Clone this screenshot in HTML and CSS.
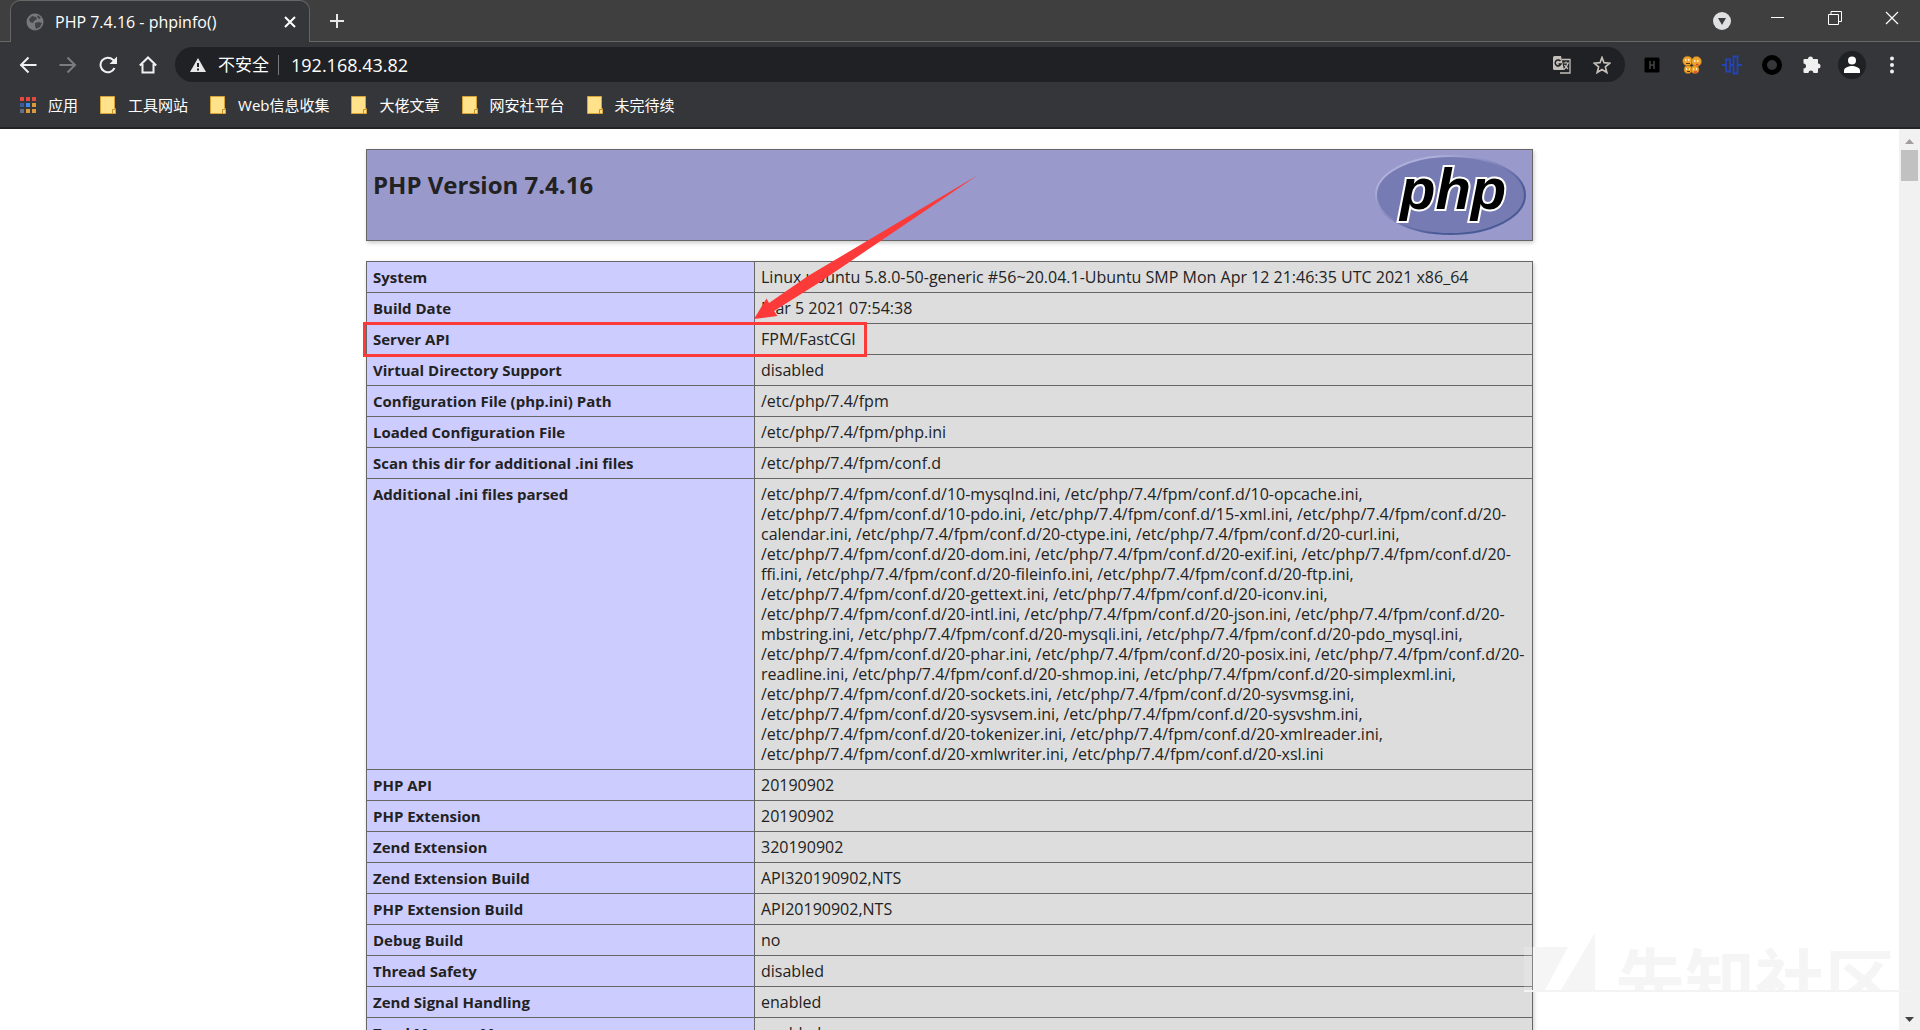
FILE: index.html
```html
<!DOCTYPE html>
<html lang="zh-CN">
<head>
<meta charset="utf-8">
<title>PHP 7.4.16 - phpinfo()</title>
<link rel="stylesheet" href="styles.css">
</head>
<body>
<header class="chrome">
  <div class="tabstrip">
    <div class="tab">
      <svg class="i18" viewBox="0 0 18 18"><circle cx="9" cy="9" r="8.500" fill="#77787b"/><path d="M3 6l3-3 4 1 1 2-3 2-1 2-3-1zM9 10l4-1 3 1-2 4-4 2-1-3zM12 2l3 3-2 1-2-2z" fill="#414245"/></svg>
      <span class="tab-title">PHP 7.4.16 - phpinfo()</span>
      <button class="icon-btn" aria-label="关闭标签页"><svg width="12" height="12" viewBox="0 0 12 12"><path d="M1 1l10 10M11 1L1 11" stroke="#fff" stroke-width="2"/></svg></button>
    </div>
    <button class="icon-btn new-tab" aria-label="新标签页"><svg width="16" height="16" viewBox="0 0 16 16"><path d="M8 1v14M1 8h14" stroke="#e8e8e8" stroke-width="2"/></svg></button>
    <div class="window-controls">
      <button class="icon-btn search-tabs" aria-label="搜索标签页"><svg class="i18" viewBox="0 0 18 18"><circle cx="9" cy="9" r="9" fill="#dfe0e2"/><path d="M5 6h8l-4 7z" fill="#3c3c3c"/></svg></button>
      <button class="icon-btn win" aria-label="最小化"><svg width="14" height="14" viewBox="0 0 14 14"><path d="M0 6.500h13" stroke="#fff"/></svg></button>
      <button class="icon-btn win" aria-label="还原"><svg width="14" height="14" viewBox="0 0 14 14"><path d="M.5 3.500h10v10h-10zM3 3V.5h10.500v10H11" fill="none" stroke="#fff"/></svg></button>
      <button class="icon-btn win" aria-label="关闭"><svg width="14" height="14" viewBox="0 0 14 14"><path d="M1 1l12 12M13 1L1 13" stroke="#fff" stroke-width="1.200"/></svg></button>
    </div>
  </div>
  <div class="toolbar">
    <nav class="nav">
      <button class="icon-btn" aria-label="后退"><svg class="i18" viewBox="0 0 18 18"><path d="M17.500 9H2M9.500 1.500L2 9l7.500 7.500" fill="none" stroke="#f0f0f0" stroke-width="2"/></svg></button>
      <button class="icon-btn" aria-label="前进"><svg class="i18" viewBox="0 0 18 18"><path d="M.5 9H16M8.500 1.500L16 9l-7.500 7.500" fill="none" stroke="#7b7c7f" stroke-width="2"/></svg></button>
      <button class="icon-btn" aria-label="重新加载"><svg class="i18" viewBox="0 0 18 18"><path d="M15.500 12A7.300 7.300 0 1 1 14 3.800L16 6" fill="none" stroke="#f0f0f0" stroke-width="2"/><path d="M18 .5v7.500h-7.500z" fill="#f0f0f0"/></svg></button>
      <button class="icon-btn" aria-label="主页"><svg class="i18" viewBox="0 0 18 18"><path d="M.8 9.500L9 1.500l8.200 8M3.500 8v8.500h11V8" fill="none" stroke="#f0f0f0" stroke-width="2"/></svg></button>
    </nav>
    <div class="omnibox">
      <svg width="16" height="14" viewBox="0 0 16 14"><path d="M8 0l8 14H0z" fill="#e8e8e8"/><path d="M8 5v4M8 10.500v2" stroke="#202124" stroke-width="2"/></svg>
      <label class="insecure" for="url">不安全</label>
      <input id="url" class="url" value="192.168.43.82">
      <button class="icon-btn" aria-label="翻译"><svg class="i18" viewBox="0 0 18 18"><path d="M9 3.500h8v13.500H7" fill="none" stroke="#c4bfb9" stroke-width="1.300"/><path d="M0 1.500Q0 0 1.500 0H8l3 14H1.500Q0 14 0 12.500z" fill="#c4bfb9"/><path d="M7.500 5A3 3 0 1 0 8 8H5.500" fill="none" stroke="#202124" stroke-width="1.500"/><path d="M10.500 7H16M13 5.500V7M15 7q-1 4-4 6.500M11.500 9l3.500 4" fill="none" stroke="#c4bfb9" stroke-width="1.200"/></svg></button>
      <button class="icon-btn" aria-label="收藏"><svg class="i18" viewBox="0 0 18 18"><path d="M9 1.500l2 5.200 5.800.5-4.400 3.700 1.400 5.600L9 13.500l-4.800 3 1.400-5.600L1.200 7.200l5.800-.5z" fill="none" stroke="#c4bfb9" stroke-width="1.700"/></svg></button>
    </div>
    <div class="extensions">
      <button class="icon-btn" aria-label="H"><svg class="i20" viewBox="0 0 20 20"><rect x="2.500" y="2.500" width="15" height="15" rx="1.500" fill="#000"/><path d="M8 6v8M12 6v8M8 10h4" stroke="#444" stroke-width="1.500"/></svg></button>
      <button class="icon-btn" aria-label="表情"><svg class="i20" viewBox="0 0 20 20"><g fill="#eda52d" stroke="#a86a18" stroke-width=".6"><circle cx="5.500" cy="6" r="4.800"/><circle cx="14.500" cy="6.500" r="5"/><circle cx="6" cy="14.500" r="4"/><circle cx="13" cy="14.500" r="4"/></g><path d="M3 5h1.500M6 5h1.500M12 6h1.500M15 6h1.500M4 14h1M7 14h1M11 14h1M14 14h1" stroke="#fff" stroke-width="1.500"/><path d="M4 8.500h4M5 16.500h3" stroke="#5b3510"/><path d="M14 9.500h2.500M12 17h3" stroke="#e43c38" stroke-width="1.500"/></svg></button>
      <button class="icon-btn" aria-label="波形"><svg class="i20" viewBox="0 0 20 20"><path d="M0 10h4M4 4.500h4v12H4zM8 10h3.500M11.500 1.500h4v17h-4zM15.500 10H20" fill="none" stroke="#2344b6" stroke-width="1.800"/></svg></button>
      <button class="icon-btn" aria-label="圆环"><svg class="i20" viewBox="0 0 20 20"><circle cx="10" cy="10" r="7.500" fill="none" stroke="#000" stroke-width="5"/></svg></button>
      <button class="icon-btn" aria-label="扩展程序"><svg class="i20" viewBox="0 0 20 20"><path d="M1.500 5Q1.500 4 2.500 4H6a2.500 2.500 0 1 1 5 0h4q1 0 1 1v3.500a2.500 2.500 0 1 1 0 5V17q0 1-1 1h-3.500a2.500 2.500 0 0 0-5 0h-4q-1 0-1-1v-3.500a2.500 2.500 0 0 0 0-5z" fill="#f0f0f0"/></svg></button>
      <button class="icon-btn avatar" aria-label="用户"><svg class="i18" viewBox="0 0 18 18"><circle cx="9" cy="4.500" r="4" fill="#fff"/><path d="M1 17v-2.500C1 11.500 6 10 9 10s8 1.500 8 4.500V17z" fill="#fff"/></svg></button>
      <button class="icon-btn" aria-label="菜单"><svg class="i18" viewBox="0 0 18 18" fill="#f0f0f0"><circle cx="9" cy="2.500" r="2"/><circle cx="9" cy="9" r="2"/><circle cx="9" cy="15.500" r="2"/></svg></button>
    </div>
  </div>
  <nav class="bookmarks">
    <a class="bookmark" href="#"><svg width="16" height="17" viewBox="0 0 16 17"><path d="M0 0h4v4H0zM6 0h4v4H6zM12 0h4v4h-4z" fill="#e24a3f"/><path d="M0 6h4v4H0z" fill="#3c5a9c"/><path d="M6 6h4v4H6z" fill="#3b8bf0"/><path d="M12 6h4v4h-4zM6 12h4v4H6zM12 12h4v4h-4z" fill="#d89a3a"/><path d="M0 12h4v4H0z" fill="#5f6f86"/></svg>应用</a>
    <a class="bookmark" href="#"><svg class="folder" viewBox="0 0 16 18"><use href="#folder"/></svg>工具网站</a>
    <a class="bookmark" href="#"><svg class="folder" viewBox="0 0 16 18"><use href="#folder"/></svg>Web信息收集</a>
    <a class="bookmark" href="#"><svg class="folder" viewBox="0 0 16 18"><use href="#folder"/></svg>大佬文章</a>
    <a class="bookmark" href="#"><svg class="folder" viewBox="0 0 16 18"><use href="#folder"/></svg>网安社平台</a>
    <a class="bookmark" href="#"><svg class="folder" viewBox="0 0 16 18"><g id="folder"><path d="M.5.5H14.500V12L15.500 13V17.500H.5z" fill="#ffe28a" stroke="#d9a437"/><path d="M12.500 17.500V13.500h3" fill="none" stroke="#c98f22"/></g></svg>未完待续</a>
  </nav>
</header>

<div class="viewport">
  <main class="page">
    <div class="info">
      <section class="banner">
        <h1 class="version">PHP Version 7.4.16</h1>
        <svg class="logo" viewBox="0 0 151 80" role="img" aria-label="PHP logo">
          <defs><linearGradient id="rim" x1="0" y1="0" x2="1" y2="1"><stop offset=".2" stop-color="#aeb0da"/><stop offset=".5" stop-color="#777bb3"/><stop offset=".7" stop-color="#485a96"/></linearGradient></defs>
          <ellipse cx="75.500" cy="40" rx="74.500" ry="39" fill="#777bb3" stroke="url(#rim)" stroke-width="2"/>
          <text class="logo-text" x="25" y="54">php</text>
        </svg>
      </section>
      <table class="data">
        <tr><th scope="row">System</th><td>Linux ubuntu 5.8.0-50-generic #56~20.04.1-Ubuntu SMP Mon Apr 12 21:46:35 UTC 2021 x86_64</td></tr>
        <tr><th scope="row">Build Date</th><td>Mar 5 2021 07:54:38</td></tr>
        <tr><th scope="row">Server API</th><td>FPM/FastCGI</td></tr>
        <tr><th scope="row">Virtual Directory Support</th><td>disabled</td></tr>
        <tr><th scope="row">Configuration File (php.ini) Path</th><td>/etc/php/7.4/fpm</td></tr>
        <tr><th scope="row">Loaded Configuration File</th><td>/etc/php/7.4/fpm/php.ini</td></tr>
        <tr><th scope="row">Scan this dir for additional .ini files</th><td>/etc/php/7.4/fpm/conf.d</td></tr>
        <tr><th scope="row">Additional .ini files parsed</th><td>/etc/php/7.4/fpm/conf.d/10-mysqlnd.ini, /etc/php/7.4/fpm/conf.d/10-opcache.ini,<br>/etc/php/7.4/fpm/conf.d/10-pdo.ini, /etc/php/7.4/fpm/conf.d/15-xml.ini, /etc/php/7.4/fpm/conf.d/20-<br>calendar.ini, /etc/php/7.4/fpm/conf.d/20-ctype.ini, /etc/php/7.4/fpm/conf.d/20-curl.ini,<br>/etc/php/7.4/fpm/conf.d/20-dom.ini, /etc/php/7.4/fpm/conf.d/20-exif.ini, /etc/php/7.4/fpm/conf.d/20-<br>ffi.ini, /etc/php/7.4/fpm/conf.d/20-fileinfo.ini, /etc/php/7.4/fpm/conf.d/20-ftp.ini,<br>/etc/php/7.4/fpm/conf.d/20-gettext.ini, /etc/php/7.4/fpm/conf.d/20-iconv.ini,<br>/etc/php/7.4/fpm/conf.d/20-intl.ini, /etc/php/7.4/fpm/conf.d/20-json.ini, /etc/php/7.4/fpm/conf.d/20-<br>mbstring.ini, /etc/php/7.4/fpm/conf.d/20-mysqli.ini, /etc/php/7.4/fpm/conf.d/20-pdo_mysql.ini,<br>/etc/php/7.4/fpm/conf.d/20-phar.ini, /etc/php/7.4/fpm/conf.d/20-posix.ini, /etc/php/7.4/fpm/conf.d/20-<br>readline.ini, /etc/php/7.4/fpm/conf.d/20-shmop.ini, /etc/php/7.4/fpm/conf.d/20-simplexml.ini,<br>/etc/php/7.4/fpm/conf.d/20-sockets.ini, /etc/php/7.4/fpm/conf.d/20-sysvmsg.ini,<br>/etc/php/7.4/fpm/conf.d/20-sysvsem.ini, /etc/php/7.4/fpm/conf.d/20-sysvshm.ini,<br>/etc/php/7.4/fpm/conf.d/20-tokenizer.ini, /etc/php/7.4/fpm/conf.d/20-xmlreader.ini,<br>/etc/php/7.4/fpm/conf.d/20-xmlwriter.ini, /etc/php/7.4/fpm/conf.d/20-xsl.ini</td></tr>
        <tr><th scope="row">PHP API</th><td>20190902</td></tr>
        <tr><th scope="row">PHP Extension</th><td>20190902</td></tr>
        <tr><th scope="row">Zend Extension</th><td>320190902</td></tr>
        <tr><th scope="row">Zend Extension Build</th><td>API320190902,NTS</td></tr>
        <tr><th scope="row">PHP Extension Build</th><td>API20190902,NTS</td></tr>
        <tr><th scope="row">Debug Build</th><td>no</td></tr>
        <tr><th scope="row">Thread Safety</th><td>disabled</td></tr>
        <tr><th scope="row">Zend Signal Handling</th><td>enabled</td></tr>
        <tr><th scope="row">Zend Memory Manager</th><td>enabled</td></tr>
      </table>
      <div class="mark-box"></div>
      <svg class="mark-arrow" viewBox="0 0 229 150"><path d="M1 149L13.500 128.500 16 133 55 106 225 5 64 114 21 141 24.500 146z" fill="#fc3a39"/></svg>
    </div>
  </main>
  <div class="scrollbar">
    <button class="icon-btn scroll-btn" aria-label="向上滚动"><svg width="9" height="5" viewBox="0 0 9 5"><path d="M0 5l4.500-5L9 5z" fill="#a39c9c"/></svg></button>
    <div class="thumb"></div>
    <button class="icon-btn scroll-btn scroll-down" aria-label="向下滚动"><svg width="9" height="5" viewBox="0 0 9 5"><path d="M0 0h9L4.500 5z" fill="#444"/></svg></button>
  </div>
  <div class="watermark">
    <svg class="watermark-logo" viewBox="0 0 72 57"><path d="M0 14h9v43H0z" fill="#fff" opacity=".2"/><path d="M9 14h35L21 57H9zM71 0v57H37z" fill="#f5f5f6"/></svg>
    <span class="watermark-text">先知社区</span>
  </div>
</div>
</body>
</html>
```
FILE: styles.css
```css
* { box-sizing: border-box; }

body {
  margin: 0;
  height: 100vh;
  display: flex;
  flex-direction: column;
  overflow: hidden;
  background: #fff;
  color: #222;
  font-family: "Open Sans", "Noto Sans CJK SC", sans-serif;
}

svg { display: block; flex: none; }
.i18 { width: 18px; height: 18px; }
.i20 { width: 20px; height: 20px; }

.icon-btn {
  display: flex;
  align-items: center;
  justify-content: center;
  flex: none;
  padding: 0;
  border: 0;
  background: none;
}

/* Browser frame */
.chrome {
  flex: none;
  background: #35363a;
  border-bottom: 2px solid #232427;
  color: #fff;
}

.tabstrip {
  display: flex;
  height: 42px;
  padding-left: 10px;
  background: linear-gradient(#666, #666) bottom / 100% 1px no-repeat #3f3f3f;
}

.tab {
  display: flex;
  align-items: center;
  gap: 11px;
  width: 300px;
  padding: 0 13px 0 15px;
  background: #35363a;
  border: 1px solid #666;
  border-bottom: 0;
  border-radius: 10px 10px 0 0;
}

.tab-title { flex: 1; font-size: 16px; line-height: 20px; white-space: nowrap; }
.new-tab { margin-left: 19px; width: 16px; }
.window-controls { display: flex; margin-left: auto; padding-bottom: 6px; }
.search-tabs { width: 54px; padding-top: 6px; }
.win { width: 57px; }

.toolbar {
  display: flex;
  align-items: center;
  height: 45px;
  padding: 0 19px;
}

.nav { display: flex; gap: 22px; margin-right: 18px; }

.omnibox {
  flex: 1;
  display: flex;
  align-items: center;
  height: 35px;
  padding: 0 14px 0 15px;
  border-radius: 18px;
  background: #202124;
}

.insecure {
  padding: 0 9px 0 12px;
  font-size: 17px;
  line-height: 20px;
  border-right: 1px solid #77787b;
}

.url {
  flex: 1;
  min-width: 0;
  padding: 0 12px;
  border: 0;
  outline: 0;
  background: none;
  color: #fff;
  font: 18px "Open Sans", sans-serif;
}

.omnibox .icon-btn + .icon-btn { margin-left: 22px; }

.extensions { display: flex; align-items: center; gap: 20px; margin-left: 17px; }
.avatar { width: 28px; height: 28px; margin: 0 -3px 0 -4px; border-radius: 50%; background: #202124; }

.bookmarks {
  display: flex;
  align-items: center;
  gap: 22px;
  height: 40px;
  padding: 0 20px 4px;
}

.bookmark {
  display: flex;
  align-items: center;
  gap: 12px;
  color: #fff;
  font-size: 15px;
  line-height: 20px;
  text-decoration: none;
  white-space: nowrap;
}

.folder { width: 16px; height: 18px; }

/* Document area */
.viewport {
  position: relative;
  flex: 1;
  min-height: 0;
  display: flex;
}

.page { flex: 1; min-width: 0; overflow: hidden; padding: 20px; }

.info { position: relative; max-width: 1167px; margin: 0 auto; }

.banner {
  display: flex;
  justify-content: space-between;
  height: 92px;
  margin-bottom: 20px;
  padding: 5px 6px;
  background: #9999cc;
  border: 1px solid #666;
  box-shadow: 1px 2px 4px #ccc;
}

.version { margin: 15px 0 0; font-size: 24px; line-height: 30px; }

.logo { width: 151px; height: 80px; overflow: visible; }

.logo-text {
  font: italic bold 58px "Liberation Sans", sans-serif;
  fill: #000;
  stroke: #fff;
  stroke-width: 4px;
  paint-order: stroke;
}

.data {
  width: 100%;
  border-collapse: collapse;
  box-shadow: 1px 2px 4px #ccc;
  font-size: 16px;
  line-height: 20px;
}

.data th, .data td {
  padding: 5px 6px;
  border: 1px solid #666;
  text-align: left;
  vertical-align: top;
}

.data th {
  width: 388px;
  background: #ccccff;
  font-size: 15px;
  font-weight: 700;
}

.data td { background: #dddddd; }

/* Annotation drawn over the table */
.mark-box {
  position: absolute;
  left: -3px;
  top: 173px;
  width: 504px;
  height: 35px;
  border: 3px solid #fc3a39;
}

.mark-arrow {
  position: absolute;
  left: 387px;
  top: 21px;
  width: 229px;
  height: 150px;
}

.scrollbar {
  flex: none;
  display: flex;
  flex-direction: column;
  width: 21px;
  padding: 0 2px;
  background: #f1f1f1;
}

.scroll-btn { height: 21px; padding-top: 3px; }
.scroll-down { margin-top: auto; padding: 0; }
.thumb { height: 31px; background: #c1c1c1; }

.watermark {
  position: absolute;
  right: 10px;
  bottom: 38px;
  display: flex;
  align-items: flex-end;
  gap: 19px;
  border-bottom: 2px solid #f3f3f3;
}

.watermark-logo { width: 72px; height: 57px; }

.watermark-text {
  height: 47px;
  width: 295px;
  overflow: hidden;
  color: #f5f5f6;
  font: bold 70px/70px "Noto Sans CJK SC", sans-serif;
}
```
